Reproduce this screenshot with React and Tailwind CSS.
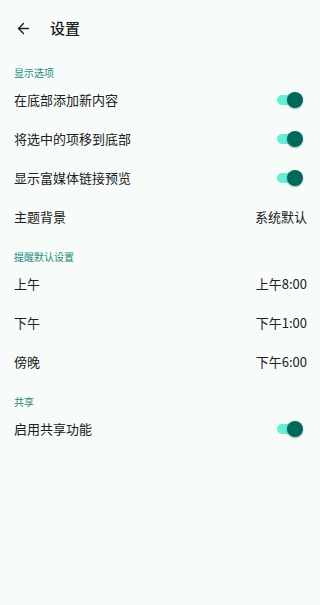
import { ArrowLeft } from "lucide-react";

const Toggle = () => (
  <div className="relative w-[26px] h-[16px] mr-[4px] flex items-center">
    <div className="w-[22px] h-[10px] rounded-full bg-[#66eed4]" />
    <div className="absolute right-0 top-0 w-[16px] h-[16px] rounded-full bg-[#00695c] shadow-[0_1px_2px_rgba(0,0,0,0.3)]" />
  </div>
);

const Section = ({ title }) => (
  <div className="px-[14px] pt-[15px] pb-[2px] text-[10px] text-[#26897a] leading-[11px]">
    {title}
  </div>
);

const Row = ({ label, right }) => (
  <div className="flex items-center justify-between h-[39px] pl-[14px] pr-[13px]">
    <span className="text-[13px] text-[#202020]">{label}</span>
    {right}
  </div>
);

const Value = ({ children }) => (
  <span className="text-[13px] text-[#202020]">{children}</span>
);

export default function App() {
  return (
    <div
      className="w-[320px] h-[605px] bg-[#f7fbf9] overflow-hidden"
      style={{ fontFamily: '"Noto Sans CJK SC", Roboto, sans-serif' }}
    >
      {/* Header */}
      <div className="flex items-center h-[52px] pt-[4px] pl-[15px]">
        <ArrowLeft size={17} strokeWidth={2} className="text-[#202020]" />
        <span className="ml-[18px] text-[15px] font-medium text-[#202020]">设置</span>
      </div>

      <Section title="显示选项" />
      <Row label="在底部添加新内容" right={<Toggle />} />
      <Row label="将选中的项移到底部" right={<Toggle />} />
      <Row label="显示富媒体链接预览" right={<Toggle />} />
      <Row label="主题背景" right={<Value>系统默认</Value>} />

      <Section title="提醒默认设置" />
      <Row label="上午" right={<Value>上午8:00</Value>} />
      <Row label="下午" right={<Value>下午1:00</Value>} />
      <Row label="傍晚" right={<Value>下午6:00</Value>} />

      <Section title="共享" />
      <Row label="启用共享功能" right={<Toggle />} />
    </div>
  );
}
